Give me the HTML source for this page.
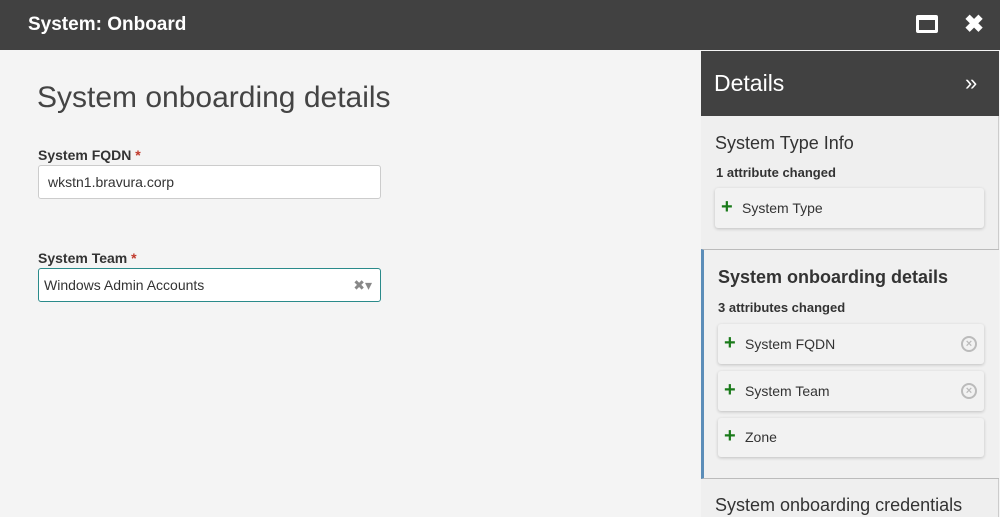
<!DOCTYPE html>
<html><head><style>
*{margin:0;padding:0;box-sizing:border-box}
body{width:1000px;height:517px;overflow:hidden;background:#f4f4f4;font-family:"Liberation Sans",sans-serif;color:#333;position:relative}
.top{position:absolute;left:0;top:0;width:1000px;height:50px;background:#414141;color:#fff;font-weight:bold;font-size:19px}
.abs{position:absolute}
.lbl{font-size:14px;font-weight:bold;color:#333}
.req{color:#c0392b}
.inp{position:absolute;background:#fff;border:1px solid #ccc;border-radius:3px;font-size:14px;padding-left:9px;line-height:32px}
.panel{position:absolute;left:701px;top:51px;width:298px;height:466px;background:#efefef;border-right:1px solid #ccc}
.card{position:absolute;background:#f2f2f2;border-radius:3px;box-shadow:0 1px 3px rgba(0,0,0,.2);font-size:14px;color:#333;line-height:40px;padding-left:27px}
.plus{position:absolute;left:6px;top:-1px;color:#1a7a1a;font-weight:bold;font-size:20px}
.xc{position:absolute;right:7px;top:12px;width:16px;height:16px;border-radius:50%;border:2px solid #bbb;color:#bbb;font-size:11px;line-height:12px;text-align:center;font-weight:bold}
</style></head><body>
<div class="top"><span class="abs" style="left:28px;top:14px">System: Onboard</span>
<div class="abs" style="left:916px;top:15px;width:22px;height:18px;border:3px solid #fff;border-top-width:5px;border-radius:2px"></div>
<span class="abs" style="left:964px;top:10px;font-size:24px">✖</span></div>
<div class="abs" style="left:37px;top:81px;font-size:30px;color:#444">System onboarding details</div>
<div class="abs lbl" style="left:38px;top:147px">System FQDN <span class="req">*</span></div>
<div class="inp" style="left:38px;top:165px;width:343px;height:34px">wkstn1.bravura.corp</div>
<div class="abs lbl" style="left:38px;top:250px">System Team <span class="req">*</span></div>
<div class="inp" style="left:38px;top:268px;width:343px;height:34px;border-color:#2a8a8a;padding-left:5px">Windows Admin Accounts<span class="abs" style="right:8px;top:0;color:#888;font-size:14px">✖▾</span></div>
<div class="panel">
<div class="abs" style="left:0;top:0;width:298px;height:65px;background:#414141;color:#fff;font-size:23px"><span class="abs" style="left:13px;top:19px">Details</span><span class="abs" style="left:264px;top:19px;font-size:22px">»</span></div>
<div class="abs" style="left:14px;top:82px;font-size:18px">System Type Info</div>
<div class="abs" style="left:15px;top:114px;font-size:13px;font-weight:bold">1 attribute changed</div>
<div class="card" style="left:14px;top:137px;width:269px;height:40px"><span class="plus">+</span>System Type</div>
<div class="abs" style="left:0;top:198px;width:298px;height:230px;border-top:1px solid #bbb;border-bottom:1px solid #bbb;border-left:3px solid #5b8db8;background:#f0f0f0"></div>
<div class="abs" style="left:17px;top:216px;font-size:18px;font-weight:bold;color:#333">System onboarding details</div>
<div class="abs" style="left:17px;top:249px;font-size:13px;font-weight:bold">3 attributes changed</div>
<div class="card" style="left:17px;top:273px;width:266px;height:40px"><span class="plus">+</span>System FQDN<span class="xc">×</span></div>
<div class="card" style="left:17px;top:320px;width:266px;height:40px"><span class="plus">+</span>System Team<span class="xc">×</span></div>
<div class="card" style="left:17px;top:367px;width:266px;height:39px;line-height:39px"><span class="plus">+</span>Zone</div>
<div class="abs" style="left:14px;top:444px;font-size:18px">System onboarding credentials</div>
</div>
</body></html>
